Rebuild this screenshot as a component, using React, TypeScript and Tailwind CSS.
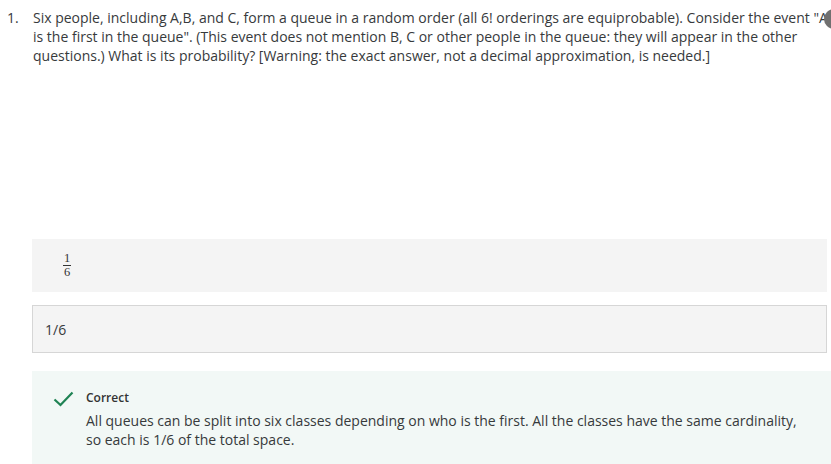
import React from "react";

export default function App() {
  return (
    <div
      className="relative w-[831px] h-[464px] overflow-hidden bg-white text-[#373a3c]"
      style={{ fontFamily: '"Open Sans", sans-serif' }}
    >
      <div className="flex pt-[8px] text-[14px] leading-[19px] w-[860px]">
        <div className="w-[33px] pl-[7px] shrink-0">1.</div>
        <div className="w-[806px]">
          Six people, including A,B, and C, form a queue in a random order (all 6! orderings are equiprobable). Consider the event "A" is the first in the queue". (This event does not mention B, C or other people in the queue: they will appear in the other questions.) What is its probability? [Warning: the exact answer, not a decimal approximation, is needed.]
        </div>
      </div>
      <div className="absolute left-[824px] top-[9px] w-[20px] h-[20px] rounded-full bg-[#707070]" />
      <div className="ml-[32px] mt-[174px] w-[795px] h-[53px] bg-[#f4f4f4] flex items-center pl-[31px]">
        <span
          className="inline-flex flex-col items-center text-[12.5px] leading-[11px] text-[#333]"
          style={{ fontFamily: '"Liberation Serif", "DejaVu Serif", serif' }}
        >
          <span>1</span>
          <span className="block w-[8px] h-[1px] bg-[#333] my-[1px]" />
          <span>6</span>
        </span>
      </div>
      <div className="ml-[32px] mt-[13px] w-[795px] h-[48px] bg-[#f4f4f4] border border-[#d6d6d6] flex items-center pl-[12px] text-[14px]">
        1/6
      </div>
      <div className="ml-[32px] mt-[18px] w-[810px] h-[93px] bg-[#f2f8f6] flex pt-[18px]">
        <div className="w-[54px] shrink-0 flex justify-center pt-[2px] pl-[9px]">
          <svg width="21" height="16" viewBox="0 0 21 16">
            <path d="M1.5 8.5 L7.5 14 L19.5 1.5" fill="none" stroke="#1f8354" strokeWidth="2.2" />
          </svg>
        </div>
        <div>
          <div className="text-[12px] font-semibold leading-[17px] text-[#333]">Correct</div>
          <div className="mt-[5px] text-[14px] leading-[19px] w-[720px]">
            All queues can be split into six classes depending on who is the first. All the classes have the same cardinality, so each is 1/6 of the total space.
          </div>
        </div>
      </div>
    </div>
  );
}
